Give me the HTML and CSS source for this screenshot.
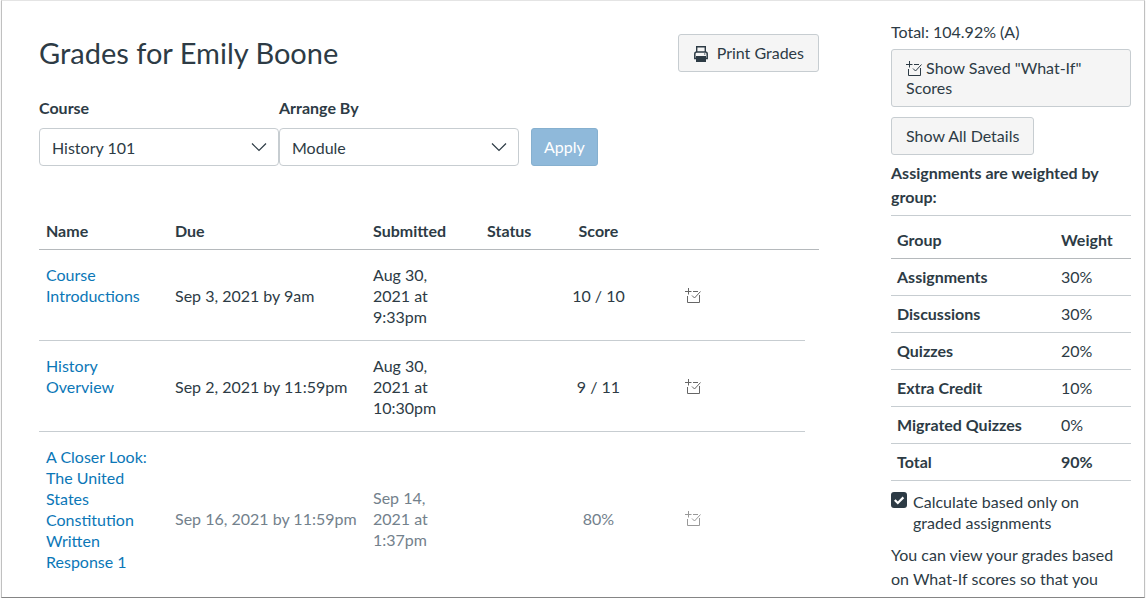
FILE: index.html
```html
<!DOCTYPE html>
<html lang="en">
<head>
<meta charset="utf-8">
<meta name="viewport" content="width=device-width, initial-scale=1">
<title>Grades for Emily Boone</title>
<link rel="stylesheet" href="styles.css">
</head>
<body>
<svg class="sprite" aria-hidden="true">
  <symbol id="what-if" viewBox="0 0 16 16">
    <path d="M0 3.5h6.5M3.5 0v6.5M8 3.5h5M2.5 8v6.5h12V7M7 7.5l2.5 2.5L15.5 3.5" fill="none" stroke="currentColor"/>
  </symbol>
  <symbol id="chevron" viewBox="0 0 16 10">
    <path d="M1 1.5l7 7 7-7" fill="none" stroke="currentColor" stroke-width="1.2"/>
  </symbol>
</svg>
<div class="page">
  <main class="main">
    <header class="title-bar">
      <h1 class="title">Grades for Emily Boone</h1>
      <button class="btn print" type="button">
        <svg class="icon-print" viewBox="0 0 14 16" aria-hidden="true">
          <path d="M2.7 6V0.8h8.6V6" fill="none" stroke="currentColor" stroke-width="1.4"/>
          <path d="M2.5 12.5H0.8V8Q0.8 6 2.8 6h8.4q2 0 2 2v4.5H11.5" fill="none" stroke="currentColor" stroke-width="1.5"/>
          <path d="M2 10h10v6H2z" fill="currentColor"/>
          <path d="M10 8h1.4" stroke="currentColor"/>
        </svg>
        Print Grades
      </button>
    </header>
    <form class="filters">
      <div class="field">
        <label class="field-label" for="course">Course</label>
        <div class="select-wrap">
          <select class="select" id="course"><option>History 101</option></select>
          <svg class="chevron" aria-hidden="true"><use href="#chevron"/></svg>
        </div>
      </div>
      <div class="field">
        <label class="field-label" for="arrange">Arrange By</label>
        <div class="select-wrap">
          <select class="select" id="arrange"><option>Module</option></select>
          <svg class="chevron" aria-hidden="true"><use href="#chevron"/></svg>
        </div>
      </div>
      <button class="btn apply" type="button">Apply</button>
    </form>
    <table class="grades">
      <colgroup>
        <col class="c-name"><col class="c-due"><col class="c-submitted"><col class="c-status"><col class="c-score"><col><col class="c-end">
      </colgroup>
      <thead>
        <tr><th>Name</th><th>Due</th><th>Submitted</th><th>Status</th><th class="score">Score</th><th></th><th></th></tr>
      </thead>
      <tbody>
        <tr>
          <td class="name"><a href="#">Course Introductions</a></td>
          <td class="due">Sep 3, 2021 by 9am</td>
          <td class="submitted">Aug 30, 2021 at 9:33pm</td>
          <td></td>
          <td class="score">10 / 10</td>
          <td class="details"><svg class="icon" aria-hidden="true"><use href="#what-if"/></svg></td>
          <td class="end"></td>
        </tr>
        <tr>
          <td class="name"><a href="#">History Overview</a></td>
          <td class="due">Sep 2, 2021 by 11:59pm</td>
          <td class="submitted">Aug 30, 2021 at 10:30pm</td>
          <td></td>
          <td class="score">9 / 11</td>
          <td class="details"><svg class="icon" aria-hidden="true"><use href="#what-if"/></svg></td>
          <td class="end"></td>
        </tr>
        <tr class="muted">
          <td class="name"><a href="#">A Closer Look: The United States Constitution Written Response 1</a></td>
          <td class="due">Sep 16, 2021 by 11:59pm</td>
          <td class="submitted">Sep 14, 2021 at 1:37pm</td>
          <td></td>
          <td class="score">80%</td>
          <td class="details"><svg class="icon" aria-hidden="true"><use href="#what-if"/></svg></td>
          <td class="end"></td>
        </tr>
      </tbody>
    </table>
  </main>
  <aside class="side">
    <div class="total">Total: 104.92% (A)</div>
    <button class="btn saved" type="button"><svg class="icon inline" aria-hidden="true"><use href="#what-if"/></svg> Show Saved "What-If" Scores</button>
    <button class="btn" type="button">Show All Details</button>
    <h2 class="weights-title">Assignments are weighted by group:</h2>
    <table class="weights">
      <thead><tr><th>Group</th><th class="weight">Weight</th></tr></thead>
      <tbody>
        <tr><th>Assignments</th><td>30%</td></tr>
        <tr><th>Discussions</th><td>30%</td></tr>
        <tr><th>Quizzes</th><td>20%</td></tr>
        <tr><th>Extra Credit</th><td>10%</td></tr>
        <tr><th>Migrated Quizzes</th><td>0%</td></tr>
        <tr class="sum"><th>Total</th><td>90%</td></tr>
      </tbody>
    </table>
    <div class="check">
      <span class="check-box">
        <input class="check-input" type="checkbox" id="graded" checked>
        <svg class="check-mark" viewBox="0 0 16 16" aria-hidden="true"><path d="M3.8 8l3 3 5.6-5.6" fill="none" stroke="currentColor" stroke-width="2.2"/></svg>
      </span>
      <label for="graded">Calculate based only on graded assignments</label>
    </div>
    <p class="note">You can view your grades based on What-If scores so that you</p>
  </aside>
</div>
</body>
</html>
```
FILE: styles.css
```css
* { box-sizing: border-box; }
body {
  margin: 0;
  background: #fff;
  color: #2d3b45;
  font: 16px/21px Lato, "Liberation Sans", sans-serif;
}
.sprite { display: none; }
.page {
  display: flex;
  gap: 72px;
  height: calc(100vh - 2px);
  margin: 0 1px;
  padding: 0 13px 0 37px;
  overflow: hidden;
  border: 1px solid #c0c0c0;
  border-top-color: #e4e4e4;
  border-bottom-color: #858585;
  box-shadow: 0 1px 1px #ccc;
}
.main { flex: 1; min-width: 0; padding-top: 33px; }
.title-bar { display: flex; justify-content: space-between; align-items: center; }
.title { margin: 0; font-size: 29px; line-height: 38px; font-weight: 400; }
.btn {
  padding: 8px 14px;
  border: 1px solid #c7cdd1;
  border-radius: 3px;
  background: #f5f5f5;
  color: inherit;
  font: inherit;
  line-height: 20px;
  text-align: left;
}
.print { display: flex; align-items: center; gap: 8px; }
.icon-print { width: 16px; height: 16px; margin-top: 2px; }
.filters { display: flex; align-items: flex-end; margin-top: 24px; }
.field { width: 240px; }
.field-label { display: block; margin-bottom: 9px; line-height: 23px; font-weight: 700; }
.select-wrap { position: relative; }
.select {
  display: block;
  width: 100%;
  height: 38px;
  padding: 0 36px 0 12px;
  appearance: none;
  border: 1px solid #c7cdd1;
  border-radius: 4px;
  background: #fff;
  color: inherit;
  font: inherit;
}
.chevron { position: absolute; right: 12px; top: 14px; width: 16px; height: 10px; pointer-events: none; }
.apply { margin-left: 12px; padding: 8px 12px; border-color: #86b0cf; background: #8fb9da; color: #fff; }
.grades, .weights { width: 100%; border-collapse: separate; border-spacing: 0; table-layout: fixed; text-align: left; }
.grades { margin-top: 47px; }
.c-name { width: 129px; }
.c-due { width: 198px; }
.c-submitted { width: 114px; }
.c-status { width: 59px; }
.c-score { width: 119px; }
.c-end { width: 14px; }
.grades th { padding: 8px 7px; line-height: 20px; border-bottom: 1px solid #b5b9bc; }
.grades td { padding: 14px 7px 13px; border-bottom: 1px solid #c7cdd1; }
.grades .name { padding-bottom: 32px; vertical-align: top; }
.grades .due { padding-right: 0; white-space: nowrap; }
.grades .submitted { padding-right: 32px; }
.grades .score { text-align: center; }
.grades .details { padding-left: 27px; }
.grades .end { padding: 0; border: 0; }
.grades a { color: #0b77b7; text-decoration: none; }
.muted { color: #73818c; }
.icon { display: block; width: 16px; height: 16px; color: #666; }
.muted .icon { color: #999; }
.icon.inline { display: inline-block; vertical-align: -3px; color: inherit; }
.side { width: 240px; padding-top: 20px; }
.total { margin-bottom: 7px; }
.saved { display: block; width: 100%; margin-bottom: 10px; }
.weights-title { margin: 6px 0; font-size: 16px; line-height: 24px; font-weight: 700; }
.weights { border-top: 1px solid #c7cdd1; }
.weights th, .weights td { padding: 8px 6px; line-height: 20px; border-bottom: 1px solid #c7cdd1; }
.weights thead th { padding: 14px 6px 8px; border-bottom-color: #b5b9bc; }
.weights .weight { width: 76px; }
.sum { font-weight: 700; }
.check { display: flex; gap: 6px; margin-top: 10px; }
.check-box { position: relative; flex: none; width: 16px; height: 16px; margin-top: 1px; }
.check-input { display: block; width: 16px; height: 16px; margin: 0; appearance: none; border-radius: 3px; background: #2d3b45; }
.check-mark { position: absolute; inset: 0; color: #fff; pointer-events: none; }
.note { margin: 10px 0 0; line-height: 24px; }
```
